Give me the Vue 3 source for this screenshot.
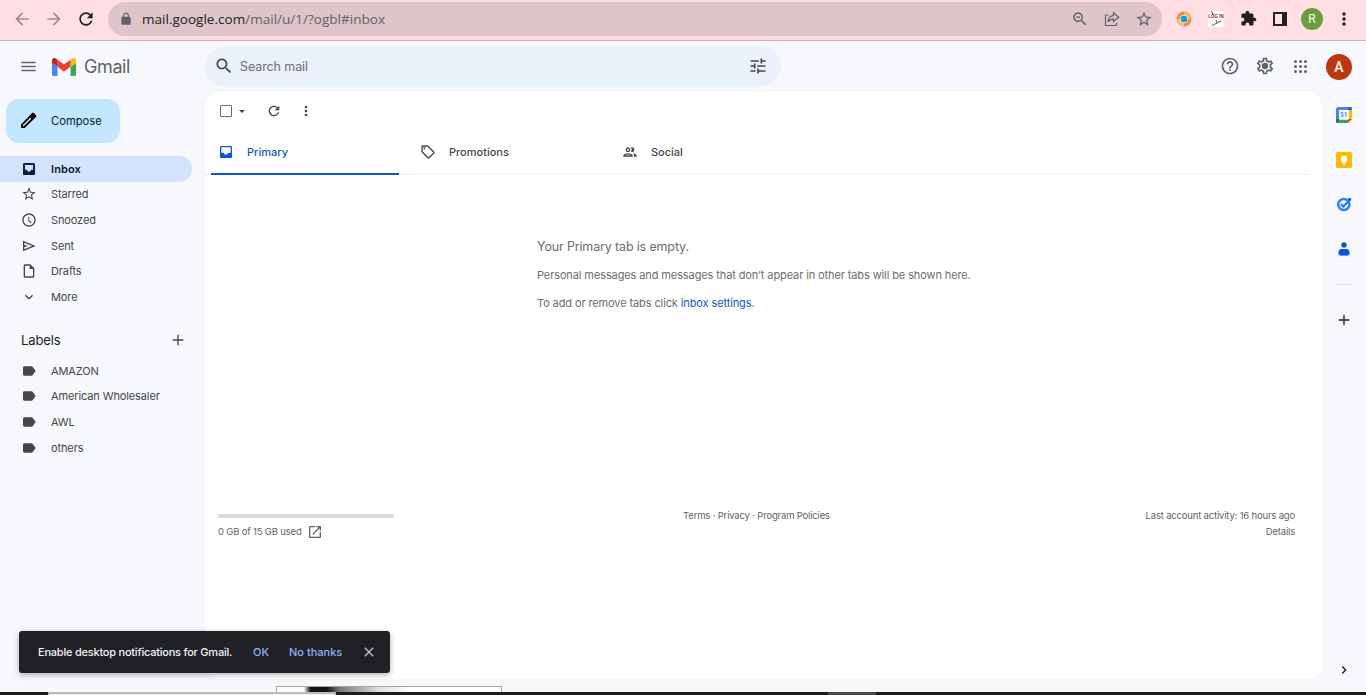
<template>
  <div class="window">
    <header class="browser-bar">
      <div class="nav-buttons">
        <svg class="icon-18 faded" viewBox="0 0 24 24"><path :d="icons.back" /></svg>
        <svg class="icon-18 faded" viewBox="0 0 24 24"><path :d="icons.forward" /></svg>
        <svg class="icon-20 solid" viewBox="0 0 24 24"><path :d="icons.refresh" /></svg>
      </div>
      <div class="address-bar">
        <svg class="icon-14" viewBox="0 0 24 24"><path :d="icons.lock" /></svg>
        <span class="url"><span class="host">mail.google.com</span>/mail/u/1/?ogbl#inbox</span>
        <div class="address-actions">
          <svg class="icon-18" viewBox="0 0 24 24"><path :d="icons.zoomOut" /></svg>
          <svg class="icon-16 line" viewBox="0 0 16 16">
            <path d="M4.5 4H1.5v10.5h11V12" />
            <path d="M9.5 1.8l5.2 4.4-5.2 4.3V8.2C7 8.2 5.2 9 4 11c.2-3.4 2-6.2 5.5-6.7z" />
          </svg>
          <svg class="icon-18" viewBox="0 0 24 24"><path :d="icons.star" /></svg>
        </div>
      </div>
      <div class="extensions">
        <div class="slot">
          <svg class="icon-16" viewBox="0 0 16 16">
            <circle cx="8" cy="8" r="7.5" fill="#f28b3c" />
            <path d="M8 .5A7.5 7.5 0 0 1 15.5 8H8z" fill="#f6b26b" />
            <path d="M.5 8A7.5 7.5 0 0 0 8 15.5V8z" fill="#f9bd77" />
            <circle cx="8" cy="8" r="4.2" fill="#dfe3e4" />
            <circle cx="8" cy="8" r="3.2" fill="#0a9be0" />
          </svg>
        </div>
        <div class="slot">
          <div class="login-ext">
            <svg class="icon-16" viewBox="0 0 16 16">
              <path d="M3.5 0l2 4.500M8 9l1 3M13 10l-9 4.500" fill="none" stroke="#777" stroke-width="1.200" />
            </svg>
            <span>LOG IN</span>
          </div>
        </div>
        <div class="slot"><svg class="icon-17 solid" viewBox="0 0 24 24"><path :d="icons.extension" /></svg></div>
        <div class="slot"><div class="side-panel-icon"></div></div>
        <div class="slot"><div class="profile">R</div></div>
        <div class="slot"><svg class="icon-20 solid" viewBox="0 0 24 24"><path :d="icons.dots" /></svg></div>
      </div>
    </header>

    <div class="app-header">
      <svg class="icon-20 menu" viewBox="0 0 24 24"><path :d="icons.menu" /></svg>
      <svg class="logo" viewBox="52 42 88 66">
        <path fill="#4285f4" d="M58 108h14V74L52 59v43c0 3.32 2.69 6 6 6" />
        <path fill="#34a853" d="M120 108h14c3.32 0 6-2.69 6-6V59l-20 15" />
        <path fill="#fbbc04" d="M120 48v26l20-15v-8c0-7.42-8.47-11.65-14.4-7.2" />
        <path fill="#ea4335" d="M72 74V48l24 18 24-18v26L96 92" />
        <path fill="#c5221f" d="M52 51v8l20 15V48l-5.6-4.2c-5.94-4.45-14.4-.22-14.4 7.2" />
      </svg>
      <span class="brand">Gmail</span>
      <div class="search">
        <svg class="icon-20" viewBox="0 0 24 24"><path :d="icons.search" /></svg>
        <span class="placeholder">Search mail</span>
        <svg class="icon-20" viewBox="0 0 24 24"><path :d="icons.tune" /></svg>
      </div>
      <div class="header-actions">
        <svg class="icon-20" viewBox="0 0 24 24"><path :d="icons.help" /></svg>
        <svg class="icon-20" viewBox="0 0 24 24">
          <path :d="icons.settings" />
          <circle cx="12" cy="12" r="3.8" />
        </svg>
        <div class="apps"><i v-for="n in 9" :key="n"></i></div>
        <div class="account">A</div>
      </div>
    </div>

    <div class="body">
      <aside class="sidebar">
        <button class="compose">
          <svg class="icon-20" viewBox="0 0 24 24"><path :d="icons.pencil" /></svg>
          <span>Compose</span>
        </button>
        <nav>
          <div v-for="f in folders" :key="f.name" class="nav-item" :class="{ active: f.active }">
            <svg class="icon-16" viewBox="0 0 24 24"><path :d="icons[f.icon]" /></svg>
            <span>{{ f.name }}</span>
          </div>
        </nav>
        <div class="labels-header">
          <span>Labels</span>
          <svg class="icon-16" viewBox="0 0 24 24"><path :d="icons.plus" /></svg>
        </div>
        <div v-for="label in labels" :key="label" class="nav-item">
          <svg class="icon-16" viewBox="0 0 24 24"><path :d="icons.label" /></svg>
          <span>{{ label }}</span>
        </div>
      </aside>

      <main class="content">
        <div class="toolbar">
          <div class="checkbox"></div>
          <div class="caret"></div>
          <svg class="icon-16 reload" viewBox="0 0 24 24"><path :d="icons.refresh" /></svg>
          <svg class="icon-16" viewBox="0 0 24 24"><path :d="icons.dots" /></svg>
        </div>
        <div class="tabs">
          <div v-for="tab in tabs" :key="tab.name" class="tab" :class="{ active: tab.active }">
            <svg class="icon-16" viewBox="0 0 24 24"><path :d="icons[tab.icon]" /></svg>
            <span>{{ tab.name }}</span>
          </div>
        </div>
        <div class="empty">
          <p class="empty-title">Your Primary tab is empty.</p>
          <p>Personal messages and messages that don’t appear in other tabs will be shown here.</p>
          <p class="hint">To add or remove tabs click <a>inbox settings</a>.</p>
        </div>
        <footer class="footer">
          <div class="storage">
            <div class="storage-bar"></div>
            <div class="storage-text">
              <span>0 GB of 15 GB used</span>
              <svg class="icon-16" viewBox="0 0 24 24"><path :d="icons.open" /></svg>
            </div>
          </div>
          <div class="links">Terms · Privacy · Program Policies</div>
          <div class="activity">
            <div>Last account activity: 16 hours ago</div>
            <div>Details</div>
          </div>
        </footer>
      </main>

      <aside class="side-panel">
        <svg class="icon-16" viewBox="0 0 16 16">
          <path fill="#4285f4" d="M1.5 0H12v3.5H3.5V12H0V1.5z" />
          <path fill="#1967d2" d="M12 0h2.5q1.5 0 1.5 1.5v2h-4z" />
          <path fill="#fbbc04" d="M12.5 3.5H16V12h-3.5z" />
          <path fill="#188038" d="M0 12h3.5v4h-2Q0 16 0 14.5z" />
          <path fill="#34a853" d="M3.5 12.5H12V16H3.5z" />
          <path fill="#ea4335" d="M12 12h4l-4 4z" />
          <path fill="#fff" d="M3 3h9.5v9.5H3z" />
          <text x="7.8" y="10" class="cal-day">31</text>
        </svg>
        <svg class="icon-16" viewBox="0 0 16 16">
          <rect width="16" height="16" rx="1.5" fill="#fbbc04" />
          <circle cx="8" cy="7" r="3.2" fill="#fff" />
          <path fill="#fff" d="M6.2 8.5h3.6v2.3H6.2zM6.5 11.5h3v1.1h-3z" />
        </svg>
        <svg class="icon-16" viewBox="0 0 16 16">
          <circle cx="7.8" cy="8.5" r="5.6" fill="none" stroke="#2684fc" stroke-width="2.5" />
          <path d="M4.8 8.2l2.5 2.4 6.7-7" fill="none" stroke="#2684fc" stroke-width="2.3" />
          <circle cx="13.7" cy="3.3" r="1.5" fill="#0066da" />
        </svg>
        <svg class="icon-16" viewBox="0 0 16 16">
          <circle cx="8" cy="4" r="2.7" fill="#0b57d0" />
          <path fill="#8ab4f8" d="M5.5 8h5q3 0 3.500 3v3.500H2V11q.5-3 3.500-3z" />
          <path fill="#0b57d0" d="M5.500 8h5q2.500 0 2.500 3v1.500q-.5 2-2 2h-6q-1.500 0-2-2V11q0-3 2.500-3z" />
        </svg>
        <div class="divider"></div>
        <svg class="icon-16 add" viewBox="0 0 24 24"><path :d="icons.plus" /></svg>
        <svg class="icon-16 collapse" viewBox="0 0 24 24"><path :d="icons.right" /></svg>
      </aside>
    </div>

    <div class="toast">
      <span class="toast-text">Enable desktop notifications for Gmail.</span>
      <span class="toast-ok">OK</span>
      <span class="toast-no">No thanks</span>
      <svg class="icon-16" viewBox="0 0 24 24"><path :d="icons.close" /></svg>
    </div>
    <div class="preview"></div>
    <div class="taskbar">
      <div class="taskbar-search"></div>
      <div class="taskbar-app"></div>
    </div>
  </div>
</template>

<script setup>
const icons = {
  back: 'M20 11H7.83l5.59-5.59L12 4l-8 8 8 8 1.41-1.41L7.83 13H20v-2z',
  forward: 'M12 4l-1.41 1.41L16.17 11H4v2h12.17l-5.58 5.59L12 20l8-8z',
  refresh:
    'M17.65 6.35C16.2 4.9 14.21 4 12 4c-4.42 0-7.99 3.58-7.99 8s3.57 8 7.99 8c3.73 0 6.84-2.55 7.73-6h-2.08c-.82 2.33-3.04 4-5.65 4-3.31 0-6-2.69-6-6s2.69-6 6-6c1.66 0 3.14.69 4.22 1.78L13 11h7V4l-2.35 2.35z',
  lock: 'M18 8h-1V6c0-2.76-2.24-5-5-5S7 3.24 7 6v2H6c-1.1 0-2 .9-2 2v10c0 1.1.9 2 2 2h12c1.1 0 2-.9 2-2V10c0-1.1-.9-2-2-2zM9 8V6c0-1.66 1.34-3 3-3s3 1.34 3 3v2H9z',
  search:
    'M15.5 14h-.79l-.28-.27C15.41 12.59 16 11.11 16 9.5 16 5.91 13.09 3 9.5 3S3 5.91 3 9.5 5.91 16 9.5 16c1.61 0 3.09-.59 4.23-1.57l.27.28v.79l5 4.99L20.49 19l-4.99-5zm-6 0C7.01 14 5 11.99 5 9.5S7.01 5 9.5 5 14 7.01 14 9.5 11.99 14 9.5 14z',
  zoomOut:
    'M15.5 14h-.79l-.28-.27C15.41 12.59 16 11.11 16 9.5 16 5.91 13.09 3 9.5 3S3 5.91 3 9.5 5.91 16 9.5 16c1.61 0 3.09-.59 4.23-1.57l.27.28v.79l5 4.99L20.49 19l-4.99-5zm-6 0C7.01 14 5 11.99 5 9.5S7.01 5 9.5 5 14 7.01 14 9.5 11.99 14 9.5 14zM7 8.8h5v1.4H7z',
  star: 'M22 9.24l-7.19-.62L12 2 9.19 8.63 2 9.24l5.46 4.73L5.82 21 12 17.27 18.18 21l-1.63-7.03L22 9.24zM12 15.4l-3.76 2.27 1-4.28-3.32-2.88 4.38-.38L12 6.1l1.71 4.04 4.38.38-3.32 2.88 1 4.28L12 15.4z',
  extension:
    'M20.5 11H19V7c0-1.1-.9-2-2-2h-4V3.5C13 2.12 11.88 1 10.5 1S8 2.12 8 3.5V5H4c-1.1 0-1.99.9-1.99 2v3.8H3.5c1.49 0 2.7 1.21 2.7 2.7s-1.21 2.7-2.7 2.7H2V20c0 1.1.9 2 2 2h3.8v-1.5c0-1.49 1.21-2.7 2.7-2.7 1.49 0 2.7 1.21 2.7 2.7V22H17c1.1 0 2-.9 2-2v-4h1.5c1.38 0 2.5-1.12 2.5-2.5S21.88 11 20.5 11z',
  dots: 'M12 8c1.1 0 2-.9 2-2s-.9-2-2-2-2 .9-2 2 .9 2 2 2zm0 2c-1.1 0-2 .9-2 2s.9 2 2 2 2-.9 2-2-.9-2-2-2zm0 6c-1.1 0-2 .9-2 2s.9 2 2 2 2-.9 2-2-.9-2-2-2z',
  menu: 'M3 18h18v-2H3v2zm0-5h18v-2H3v2zm0-7v2h18V6H3z',
  tune: 'M3 17v2h6v-2H3zM3 5v2h10V5H3zm10 16v-2h8v-2h-8v-2h-2v6h2zM7 9v2H3v2h4v2h2V9H7zm14 4v-2H11v2h10zm-6-4h2V7h4V5h-4V3h-2v6z',
  help: 'M11 18h2v-2h-2v2zm1-16C6.48 2 2 6.48 2 12s4.48 10 10 10 10-4.48 10-10S17.52 2 12 2zm0 18c-4.41 0-8-3.59-8-8s3.59-8 8-8 8 3.59 8 8-3.59 8-8 8zm0-14c-2.21 0-4 1.79-4 4h2c0-1.1.9-2 2-2s2 .9 2 2c0 2-3 1.75-3 5h2c0-2.25 3-2.5 3-5 0-2.21-1.79-4-4-4z',
  settings:
    'M19.43 12.98c.04-.32.07-.64.07-.98 0-.34-.03-.66-.07-.98l2.11-1.65c.19-.15.24-.42.12-.64l-2-3.46c-.09-.16-.26-.25-.44-.25-.06 0-.12.01-.17.03l-2.49 1c-.52-.4-1.08-.73-1.69-.98l-.38-2.65C14.46 2.18 14.25 2 14 2h-4c-.25 0-.46.18-.49.42l-.38 2.65c-.61.25-1.17.59-1.69.98l-2.49-1c-.06-.02-.12-.03-.18-.03-.17 0-.34.09-.43.25l-2 3.46c-.13.22-.07.49.12.64l2.11 1.65c-.04.32-.07.65-.07.98 0 .33.03.66.07.98l-2.11 1.65c-.19.15-.24.42-.12.64l2 3.46c.09.16.26.25.44.25.06 0 .12-.01.17-.03l2.49-1c.52.4 1.08.73 1.69.98l.38 2.65c.03.24.24.42.49.42h4c.25 0 .46-.18.49-.42l.38-2.65c.61-.25 1.17-.59 1.69-.98l2.49 1c.06.02.12.03.18.03.17 0 .34-.09.43-.25l2-3.46c.12-.22.07-.49-.12-.64l-2.11-1.65zm-1.98-1.71c.04.31.05.52.05.73 0 .21-.02.43-.05.73l-.14 1.13.89.7 1.08.84-.7 1.21-1.27-.51-1.04-.42-.9.68c-.43.32-.84.56-1.25.73l-1.06.43-.16 1.13-.2 1.35h-1.4l-.19-1.35-.16-1.13-1.06-.43c-.43-.18-.83-.41-1.23-.71l-.91-.7-1.06.43-1.27.51-.7-1.21 1.08-.84.89-.7-.14-1.13c-.03-.31-.05-.54-.05-.74s.02-.43.05-.73l.14-1.13-.89-.7-1.08-.84.7-1.21 1.27.51 1.04.42.9-.68c.43-.32.84-.56 1.25-.73l1.06-.43.16-1.13.2-1.35h1.39l.19 1.35.16 1.13 1.06.43c.43.18.83.41 1.23.71l.91.7 1.06-.43 1.27-.51.7 1.21-1.07.85-.89.7.14 1.13z',
  pencil:
    'M14.2 8.4l1.4 1.4L6 19.2H4.800V18l9.400-9.600M17.600 2.200c-.5 0-1 .2-1.400.6L2.600 16.900V21.400h4.500L21.200 7.800c.8-.8.8-2 0-2.800l-2.200-2.200c-.4-.4-.9-.6-1.400-.6z',
  inbox:
    'M19 3H5c-1.1 0-2 .9-2 2v14c0 1.1.9 2 2 2h14c1.1 0 2-.9 2-2V5c0-1.1-.9-2-2-2zm0 10h-4c0 1.66-1.35 3-3 3s-3-1.34-3-3H5V5h14v8z',
  inboxFilled:
    'M19 3H5c-1.1 0-2 .9-2 2v14c0 1.1.9 2 2 2h14c1.1 0 2-.9 2-2V5c0-1.1-.9-2-2-2zm-1 10h-3c0 1.66-1.35 3-3 3s-3-1.34-3-3H6V6h12v7z',
  clock:
    'M11.99 2C6.47 2 2 6.48 2 12s4.47 10 9.99 10C17.52 22 22 17.52 22 12S17.52 2 11.99 2zM12 20c-4.42 0-8-3.58-8-8s3.58-8 8-8 8 3.58 8 8-3.58 8-8 8zm.5-13H11v6l3.750 3.750 1.250-1.230-3.500-3.270z',
  send: 'M3 4v16l19-8L3 4zm2 3l11.85 5L5 17v-3.5l6-1.5-6-1.5V7z',
  draft: 'M14 2H6c-1.1 0-2 .9-2 2v16c0 1.1.9 2 2 2h12c1.1 0 2-.9 2-2V8l-6-6zM6 20V4h7v5h5v11H6z',
  down: 'M16.59 8.59L12 13.17 7.41 8.59 6 10l6 6 6-6z',
  right: 'M10 6L8.59 7.41 13.17 12l-4.58 4.59L10 18l6-6z',
  label:
    'M17.63 5.84C17.27 5.33 16.67 5 16 5L5 5.01C3.9 5.01 3 5.9 3 7v10c0 1.1.9 1.99 2 1.99L16 19c.67 0 1.27-.33 1.63-.84L22 12l-4.37-6.16z',
  plus: 'M20 13h-7v7h-2v-7H4v-2h7V4h2v7h7v2z',
  tag: 'M21.41 11.41l-8.83-8.83c-.37-.37-.88-.58-1.41-.58H4c-1.1 0-2 .9-2 2v7.17c0 .53.21 1.04.59 1.41l8.83 8.83c.78.78 2.05.78 2.83 0l7.17-7.17c.78-.78.78-2.04-.01-2.83zM12.83 20L4 11.17V4h7.17L20 12.83 12.83 20zM8 6.5a1.5 1.5 0 1 1-3 0 1.5 1.5 0 0 1 3 0z',
  people:
    'M9 13.75c-2.34 0-7 1.17-7 3.5V19h14v-1.75c0-2.33-4.66-3.5-7-3.5zM4.34 17c.84-.58 2.87-1.25 4.66-1.25s3.82.67 4.66 1.25H4.34zM9 12c1.93 0 3.5-1.57 3.5-3.5S10.93 5 9 5 5.5 6.57 5.5 8.5 7.07 12 9 12zm0-5c.83 0 1.5.67 1.5 1.5S9.83 10 9 10s-1.5-.67-1.5-1.5S8.17 7 9 7zm7.04 6.81c1.16.84 1.96 1.96 1.96 3.44V19h4v-1.75c0-2.02-3.5-3.17-5.96-3.44zM15 12c1.93 0 3.5-1.57 3.5-3.5S16.93 5 15 5c-.54 0-1.04.13-1.5.35.63.89 1 1.98 1 3.15s-.37 2.26-1 3.15c.46.22.96.35 1.5.35z',
  open: 'M19 19H5V5h7V3H5c-1.11 0-2 .9-2 2v14c0 1.1.89 2 2 2h14c1.1 0 2-.9 2-2v-7h-2v7zM14 3v2h3.59l-9.83 9.83 1.41 1.41L19 6.41V10h2V3h-7z',
  close: 'M19 6.41L17.59 5 12 10.59 6.41 5 5 6.41 10.59 12 5 17.59 6.41 19 12 13.41 17.59 19 19 17.59 13.41 12z',
}

const folders = [
  { name: 'Inbox', icon: 'inboxFilled', active: true },
  { name: 'Starred', icon: 'star' },
  { name: 'Snoozed', icon: 'clock' },
  { name: 'Sent', icon: 'send' },
  { name: 'Drafts', icon: 'draft' },
  { name: 'More', icon: 'down' },
]

const labels = ['AMAZON', 'American Wholesaler', 'AWL', 'others']

const tabs = [
  { name: 'Primary', icon: 'inbox', active: true },
  { name: 'Promotions', icon: 'tag' },
  { name: 'Social', icon: 'people' },
]
</script>

<style>
body {
  margin: 0;
  overflow: hidden;
}
</style>

<style scoped>
.window {
  position: relative;
  display: flex;
  flex-direction: column;
  width: 1366px;
  height: 695px;
  overflow: hidden;
  background: #f6f8fc;
  color: #444746;
  font-family: Inter, 'Liberation Sans', sans-serif;
  font-size: 11px;
}

svg {
  display: block;
  flex-shrink: 0;
  fill: currentColor;
}

.icon-14 { width: 14px; height: 14px; }
.icon-16 { width: 16px; height: 16px; }
.icon-17 { width: 17px; height: 17px; }
.icon-18 { width: 18px; height: 18px; }
.icon-20 { width: 20px; height: 20px; }

/* browser chrome */
.browser-bar {
  box-sizing: border-box;
  display: flex;
  align-items: center;
  height: 41px;
  flex-shrink: 0;
  padding: 0 6px 3px 12px;
  border-bottom: 1px solid #cfb2b9;
  background: #ffdee4;
}

.nav-buttons {
  display: flex;
  align-items: center;
  width: 96px;
  gap: 13px;
}

.nav-buttons .faded {
  width: 20px;
  height: 20px;
  margin-right: -1px;
  color: #a08a90;
}

.solid {
  color: #202124;
}

.address-bar {
  box-sizing: border-box;
  display: flex;
  align-items: center;
  width: 1054px;
  height: 34px;
  padding: 0 9px 0 11px;
  border-radius: 17px;
  background: #dfc4c9;
  color: #5f6368;
}

.url {
  flex: 1;
  margin-left: 9px;
  font-family: 'Open Sans', 'Noto Sans', sans-serif;
  font-size: 13.5px;
  letter-spacing: 0.02px;
  white-space: nowrap;
}

.host {
  color: #202124;
}

.address-actions {
  display: flex;
  align-items: center;
  gap: 15px;
}

.line {
  fill: none;
  stroke: currentColor;
  stroke-width: 1.2;
}

.extensions {
  display: flex;
  align-items: center;
  margin-left: 6px;
}

.slot {
  display: flex;
  align-items: center;
  justify-content: center;
  width: 32px;
}

.login-ext {
  position: relative;
  width: 16px;
  height: 16px;
  background: #fff;
}

.login-ext span {
  position: absolute;
  top: 3px;
  left: 0;
  width: 16px;
  color: #8e2430;
  font: bold 4.5px/6px 'Liberation Sans', sans-serif;
  text-align: center;
  white-space: nowrap;
}

.side-panel-icon {
  box-sizing: border-box;
  width: 14px;
  height: 14px;
  border: 2px solid #202124;
  border-right-width: 5px;
}

.profile,
.account {
  display: flex;
  align-items: center;
  justify-content: center;
  width: 22px;
  height: 22px;
  border-radius: 50%;
  background: #689f38;
  color: #fff;
  font: 12px Roboto, sans-serif;
}

/* app header */
.app-header {
  box-sizing: border-box;
  display: flex;
  align-items: center;
  height: 51px;
  flex-shrink: 0;
  padding: 0 14px 0 19px;
}

.menu {
  width: 19px;
  height: 19px;
  color: #5f6368;
}

.logo {
  width: 24px;
  height: 18px;
  margin-left: 14px;
}

.brand {
  width: 121px;
  margin-left: 8px;
  color: #5f6368;
  font-size: 18px;
  letter-spacing: -0.4px;
}

.search {
  box-sizing: border-box;
  display: flex;
  align-items: center;
  width: 576px;
  height: 39px;
  padding: 0 13px 1px 9px;
  border-radius: 20px;
  background: #eaf1fb;
}

.placeholder {
  flex: 1;
  margin-left: 6px;
  color: #6b6e72;
  font-size: 12.5px;
  letter-spacing: -0.1px;
}

.header-actions {
  display: flex;
  align-items: center;
  gap: 15px;
  margin-left: auto;
  color: #5f6368;
}

.header-actions .icon-20 {
  margin-bottom: 1px;
}

.apps {
  display: grid;
  grid-template-columns: repeat(3, 3px);
  gap: 2px;
  padding: 0 4px 1px;
}

.apps i {
  width: 3px;
  height: 3px;
  border-radius: 50%;
  background: #5f6368;
}

.account {
  width: 26px;
  height: 26px;
  background: #bf360c;
  font-size: 14px;
  font-weight: 500;
}

/* body */
.body {
  display: flex;
  height: 600px;
}

.sidebar {
  width: 205px;
  letter-spacing: -0.12px;
}

.compose {
  box-sizing: border-box;
  display: flex;
  align-items: center;
  gap: 12px;
  width: 114px;
  height: 44px;
  margin: 7px 0 13px 6px;
  padding: 0 0 1px 13px;
  border: none;
  border-radius: 13px;
  background: #c2e7ff;
  color: #001d35;
  font-family: inherit;
  font-size: 11.2px;
}

.compose svg {
  width: 19px;
  height: 19px;
  margin-right: 1px;
  color: #000;
}

.nav-item {
  box-sizing: border-box;
  display: flex;
  align-items: center;
  gap: 14px;
  width: 192px;
  height: 25.65px;
  padding-left: 21px;
  border-radius: 0 13px 13px 0;
}

.nav-item.active {
  background: #d3e3fd;
  color: #001d35;
  font-weight: 600;
  letter-spacing: 0.1px;
}

.nav-item.active svg {
  color: #041e49;
}

.labels-header {
  display: flex;
  align-items: center;
  justify-content: space-between;
  height: 34px;
  padding: 13px 19px 1px 21px;
  color: #1f1f1f;
  font-size: 13px;
}

.labels-header svg {
  color: #444746;
}

.content {
  display: flex;
  flex-direction: column;
  width: 1116px;
  height: 587px;
  border-radius: 13px;
  background: #fff;
}

.toolbar {
  display: flex;
  align-items: center;
  height: 38px;
  padding-left: 15px;
}

.checkbox {
  box-sizing: border-box;
  width: 12px;
  height: 12px;
  border: 1.5px solid #6b6e6d;
  border-radius: 1px;
}

.caret {
  margin: 0 21px 0 7px;
  border: 3px solid transparent;
  border-top-color: #444746;
  border-bottom: none;
}

.reload {
  margin-right: 16px;
}

.tabs {
  box-sizing: border-box;
  display: flex;
  gap: 14px;
  width: 1104px;
  height: 45px;
  padding-left: 6px;
  border-bottom: 1px solid #eceef0;
}

.tab {
  box-sizing: border-box;
  display: flex;
  align-items: center;
  gap: 13px;
  width: 188px;
  height: 45px;
  padding-left: 7px;
  border-bottom: 2px solid transparent;
  font-weight: 500;
}

.tab.active {
  border-bottom-color: #0b57d0;
  color: #0b57d0;
}

.empty {
  padding: 62px 0 0 332px;
  color: #6b6e72;
  letter-spacing: -0.11px;
}

.empty p {
  margin: 0 0 8px;
  line-height: 20px;
  white-space: nowrap;
}

.empty .empty-title {
  font-size: 12.5px;
  letter-spacing: -0.15px;
}

.empty a {
  color: #0b57d0;
}

.footer {
  display: flex;
  justify-content: space-between;
  margin-top: 187px;
  padding: 0 26px 0 13px;
  color: #5f6368;
  font-size: 9.5px;
  letter-spacing: -0.18px;
  line-height: 16px;
}

.storage {
  width: 200px;
  padding-top: 6px;
}

.storage-bar {
  width: 176px;
  height: 4px;
  border-radius: 2px;
  background: #dadce0;
}

.storage-text {
  display: flex;
  align-items: center;
  gap: 5px;
  padding-top: 6px;
}

.activity {
  width: 200px;
  text-align: right;
}

.side-panel {
  display: flex;
  flex-direction: column;
  align-items: center;
  gap: 28.5px;
  width: 45px;
  padding-top: 15px;
  color: #1f1f1f;
}

.cal-day {
  fill: #4285f4;
  font: bold 6.5px Roboto, sans-serif;
  text-anchor: middle;
}

.divider {
  width: 16px;
  height: 1px;
  margin-top: -1.5px;
  margin-bottom: -1px;
  background: #dedfe0;
}

.collapse {
  margin-top: auto;
  margin-bottom: 14px;
}

/* overlays */
.toast {
  box-sizing: border-box;
  position: absolute;
  top: 631px;
  left: 19px;
  display: flex;
  align-items: center;
  width: 371px;
  height: 42px;
  padding: 0 13px 0 19px;
  border-radius: 3px;
  background: #202124;
  box-shadow: 0 2px 6px rgba(0, 0, 0, 0.3);
  color: #f1f3f4;
  font-weight: 500;
  white-space: nowrap;
}

.toast-text {
  width: 215px;
  letter-spacing: -0.22px;
}

.toast-ok,
.toast-no {
  color: #8ab4f8;
}

.toast-ok {
  width: 36px;
}

.toast svg {
  margin-left: auto;
  color: #bdc1c6;
}

.preview {
  box-sizing: border-box;
  position: absolute;
  top: 686px;
  left: 276px;
  width: 226px;
  height: 8px;
  border: 1px solid #a5a5a8;
  background: linear-gradient(90deg, #fff 12%, #111 15%, #111 22%, #777 28%, #ddd 45%, #fff 60%);
}

.taskbar {
  position: absolute;
  bottom: 0;
  left: 0;
  display: flex;
  width: 1366px;
  height: 3px;
  background: #1d1b1c;
}

.taskbar-search {
  box-sizing: border-box;
  width: 288px;
  margin-left: 48px;
  border: 2px solid #bababa;
  border-bottom: none;
  background: #f0f0f0;
}

.taskbar-app {
  width: 48px;
  margin-left: 492px;
  background: #4b494a;
}
</style>
